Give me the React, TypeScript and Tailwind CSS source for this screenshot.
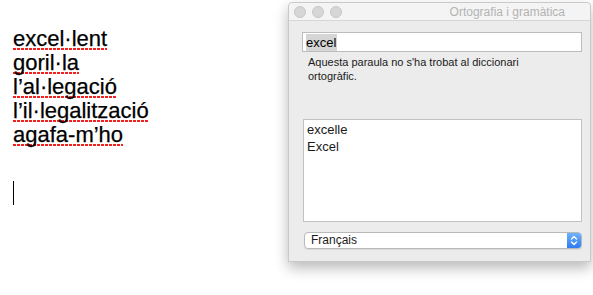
import React from "react";

const words = ["excel·lent", "goril·la", "l’al·legació", "l’il·legalització", "agafa-m’ho"];

export default function App() {
  return (
    <div className="relative w-[593px] h-[295px] bg-white overflow-hidden" style={{ fontFamily: '"Liberation Sans", Arial, sans-serif' }}>
      <div className="pl-[13px] pt-[27px] text-[22px] leading-[24px] text-black [-webkit-text-stroke:0.25px_black]">
        {words.map((w) => (
          <div key={w}>
            <span className="bg-[linear-gradient(to_right,#f52020_75%,transparent_75%)] bg-[length:4px_2px] bg-repeat-x bg-[position:0_calc(100%_-_1px)]">
              {w}
            </span>
          </div>
        ))}
        <div className="mt-[34px] w-px h-[24px] bg-black" />
      </div>

      <div className="absolute left-[288px] top-[2px] w-[303px] h-[260px] bg-[#ececec] border border-[#c9c9c9] rounded-t-[4px] shadow-[0_6px_14px_rgba(0,0,0,0.28)] flex flex-col">
        <div className="h-[18px] flex items-center justify-between bg-[#f4f4f4] border-b border-[#d6d6d6] rounded-t-[4px] pl-[5px] pr-[25px]">
          <div className="flex gap-[6px]">
            <div className="w-[12px] h-[12px] rounded-full bg-[#d6d6d6] border border-[#c8c8c8]" />
            <div className="w-[12px] h-[12px] rounded-full bg-[#d6d6d6] border border-[#c8c8c8]" />
            <div className="w-[12px] h-[12px] rounded-full bg-[#d6d6d6] border border-[#c8c8c8]" />
          </div>
          <div className="text-[12px] text-[#b3b3b3] leading-[16px]">Ortografia i gramàtica</div>
        </div>

        <div className="flex flex-col pl-[13px] pr-[8px]">
          <div className="mt-[11px] h-[20px] bg-white border border-[#bcbcbc] flex items-center pl-[3px]">
            <span className="bg-[#d5d5d5] text-[13px] leading-[17px] text-black pr-px">excel</span>
          </div>
          <div className="mt-[3px] pl-[6px] text-[11px] leading-[14px] text-[#1a1a1a]">
            Aquesta paraula no s'ha trobat al diccionari
            <br />
            ortogràfic.
          </div>
          <div className="mt-[36px] ml-px h-[103px] bg-white border border-[#c2c2c2] pl-[3px] pt-px text-[13px] leading-[17px] text-[#1a1a1a]">
            <div>excelle</div>
            <div>Excel</div>
          </div>
          <div className="mt-[10px] ml-[2px] h-[17px] bg-white border border-[#b9b9b9] rounded-[4px] shadow-[0_1px_1px_rgba(0,0,0,0.08)] flex items-stretch overflow-hidden">
            <div className="flex-1 pl-[6px] text-[12px] leading-[15px] text-[#1a1a1a]">Français</div>
            <div className="w-[14px] bg-[linear-gradient(to_bottom,#6db3fb,#2f7bf3)] flex items-center justify-center">
              <svg width="8" height="11" viewBox="0 0 8 11" fill="none" stroke="white" strokeWidth="1.4" strokeLinecap="round" strokeLinejoin="round">
                <path d="M1.5 4 L4 1.5 L6.5 4" />
                <path d="M1.5 7 L4 9.5 L6.5 7" />
              </svg>
            </div>
          </div>
        </div>
      </div>
    </div>
  );
}
